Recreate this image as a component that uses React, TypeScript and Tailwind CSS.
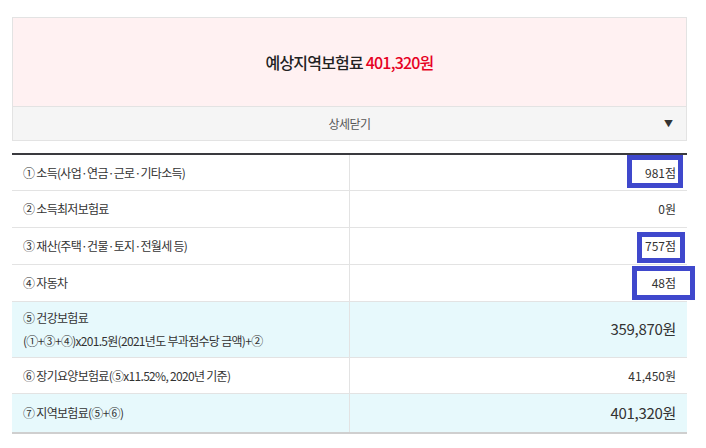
import React from "react";

const font = { fontFamily: '"Noto Sans CJK KR", "Noto Sans", sans-serif' };

function Row({
  label,
  value,
  h,
  bg,
  valueCls,
  last,
}: {
  label: React.ReactNode;
  value: string;
  h: string;
  bg?: boolean;
  valueCls: string;
  last?: boolean;
}) {
  return (
    <div
      className={`grid grid-cols-[338px_1fr] ${h} ${bg ? "bg-[#e7f9fc]" : "bg-white"} ${
        last ? "border-b-2 border-[#cfcfcf]" : "border-b border-[#e3e3e3]"
      }`}
    >
      <div className="flex flex-col justify-center pl-[11px] text-[12px] text-[#333] border-r border-[#e3e3e3] tracking-[-0.7px]">
        {label}
      </div>
      <div className={`flex items-center justify-end pr-[11px] text-[#333] ${valueCls}`}>{value}</div>
    </div>
  );
}

export default function App() {
  return (
    <div className="w-[706px] h-[448px] bg-white px-[12px] pt-[17px] box-border" style={font}>
      <div className="w-[675px] border border-[#e3e3e3]">
        <div className="h-[89px] bg-[#fff1f2] flex items-center justify-center border-b border-[#e3e3e3]">
          <span className="text-[16px] font-medium text-[#222] tracking-[-0.8px]">
            예상지역보험료 <span className="text-[#e60023]">401,320원</span>
          </span>
        </div>
        <div className="h-[33px] bg-[#f5f5f5] grid grid-cols-[1fr_auto_1fr] items-center">
          <div />
          <span className="text-[12px] text-[#555] tracking-[-0.5px]">상세닫기</span>
          <div className="flex justify-end pr-[13px]">
            <span className="text-[9px] text-[#333]">▼</span>
          </div>
        </div>
      </div>

      <div className="relative mt-[12px] w-[675px] border-t-2 border-[#3a3a3f]">
        <Row h="h-[36px]" label="① 소득(사업·연금·근로·기타소득)" value="981점" valueCls="text-[12px]" />
        <Row h="h-[37px]" label="② 소득최저보험료" value="0원" valueCls="text-[12px]" />
        <Row h="h-[37px]" label="③ 재산(주택·건물·토지·전월세 등)" value="757점" valueCls="text-[12px]" />
        <Row h="h-[37px]" label="④ 자동차" value="48점" valueCls="text-[12px]" />
        <Row
          h="h-[56px]"
          bg
          label={
            <>
              <div>⑤ 건강보험료</div>
              <div className="mt-[5px]">(①+③+④)x201.5원(2021년도 부과점수당 금액)+②</div>
            </>
          }
          value="359,870원"
          valueCls="text-[15px] tracking-[-0.3px]"
        />
        <Row h="h-[36px]" label="⑥ 장기요양보험료(⑤x11.52%, 2020년 기준)" value="41,450원" valueCls="text-[12px]" />
        <Row h="h-[40px]" bg last label="⑦ 지역보험료(⑤+⑥)" value="401,320원" valueCls="text-[15px] tracking-[-0.3px]" />

        <div className="absolute left-[615px] top-[0px] w-[56px] h-[33px] border-[5px] border-[#3f48cc]" />
        <div className="absolute left-[625px] top-[77px] w-[48px] h-[31px] border-[5px] border-[#3f48cc]" />
        <div className="absolute left-[620px] top-[111px] w-[63px] h-[34px] border-[5px] border-[#3f48cc]" />
      </div>
    </div>
  );
}
